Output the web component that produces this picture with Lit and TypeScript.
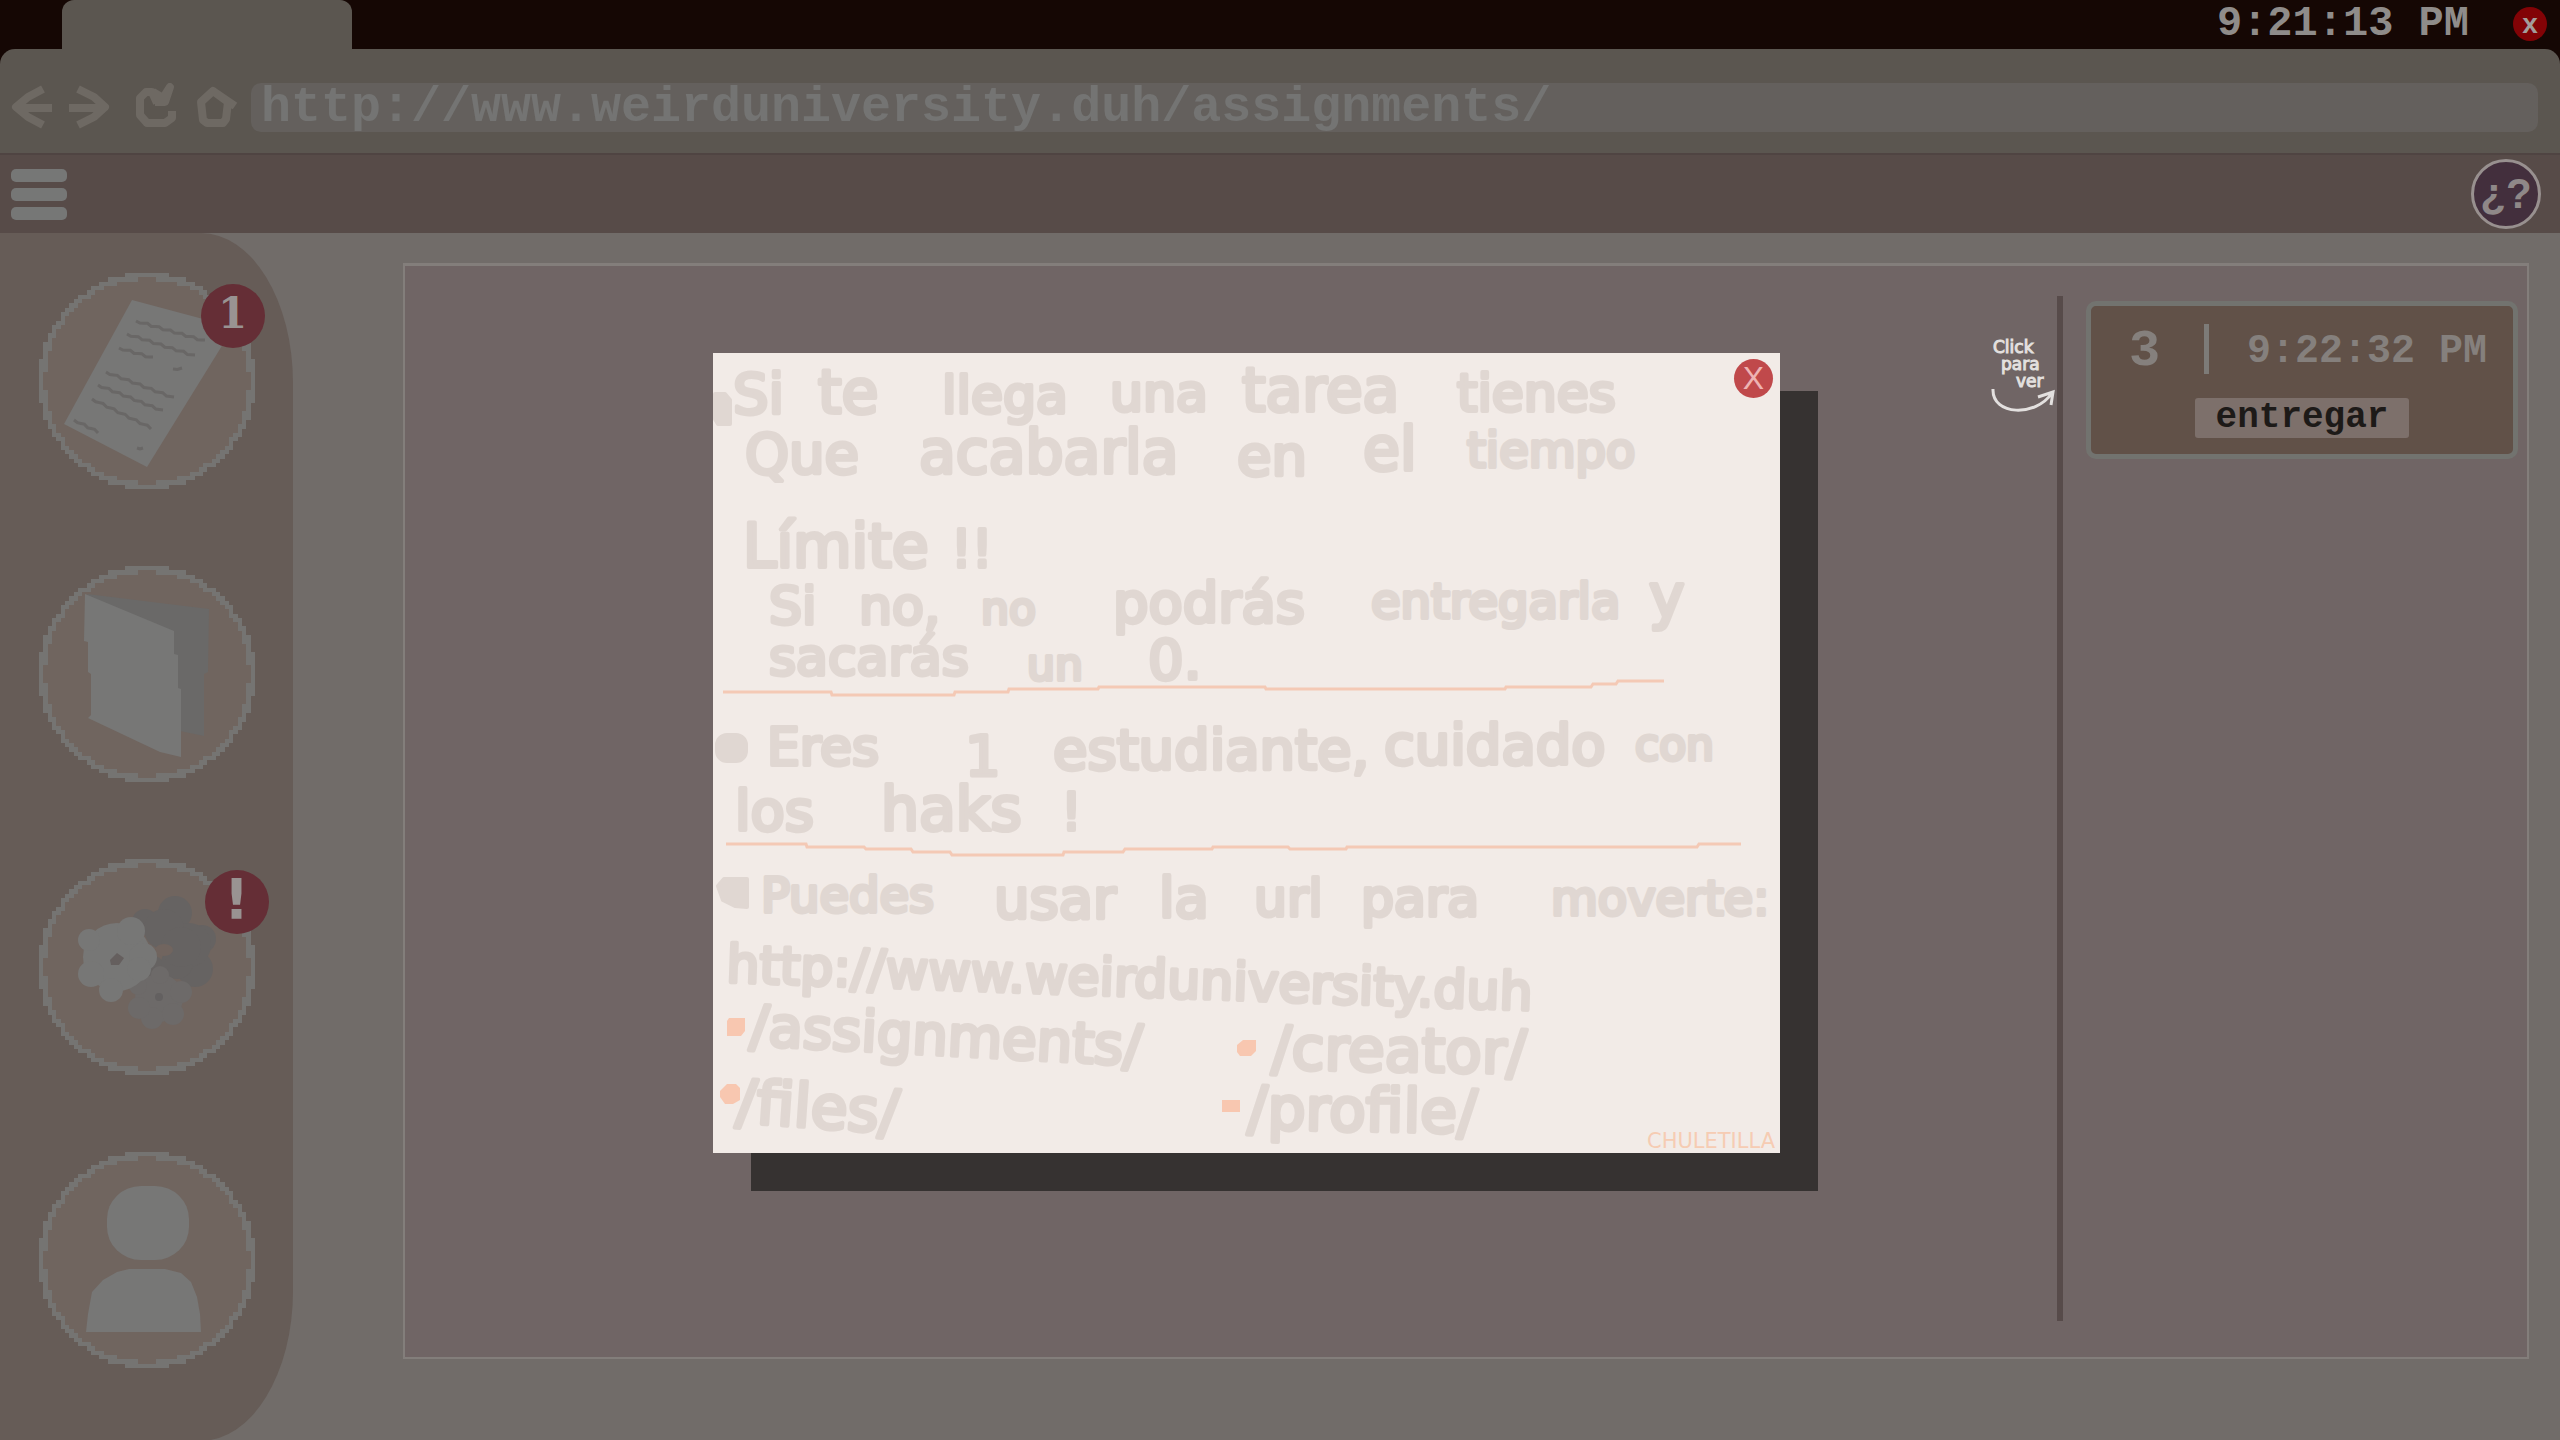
import { LitElement, html, svg, css } from "lit";
import { customElement } from "lit/decorators.js";

type Word = [text: string, x: number, y: number, size: number, tilt?: number];

/** Words of the handwritten note: text, left edge, baseline, size and tilt. */
const WORDS: Word[] = [
  ["Si", 20, 60, 56], ["te", 105, 60, 60], ["llega", 229, 60, 52], ["una", 397, 58, 52], ["tarea", 529, 58, 60], ["tienes", 744, 58, 52],
  ["Que", 32, 120, 56], ["acabarla", 206, 120, 60], ["en", 524, 122, 56], ["el", 650, 117, 60], ["tiempo", 754, 114, 48],
  ["Límite", 30, 214, 60], ["!!", 238, 214, 52],
  ["Si", 56, 271, 52], ["no,", 146, 271, 52], ["no", 268, 271, 44], ["podrás", 400, 269, 56], ["entregarla", 658, 265, 48], ["y", 936, 264, 60],
  ["sacarás", 56, 322, 52], ["un", 314, 327, 44], ["0.", 435, 326, 56],
  ["Eres", 54, 412, 52], ["1", 252, 422, 56], ["estudiante,", 340, 416, 56], ["cuidado", 671, 411, 56], ["con", 922, 407, 44],
  ["los", 22, 477, 56], ["haks", 168, 477, 60], ["!", 348, 477, 52],
  ["Puedes", 48, 559, 48], ["usar", 281, 565, 56], ["la", 446, 564, 56], ["url", 541, 563, 52], ["para", 648, 563, 52], ["moverte:", 838, 562, 48],
  ["http://www.weirduniversity.duh", 13, 629, 52, 2],
  ["/assignments/", 36, 692, 56, 3],
  ["/creator/", 558, 716, 60, 1],
  ["/files/", 22, 769, 60, 4],
  ["/profile/", 534, 776, 60, 1],
];

/** Blocky circle outline on a grid of the given number of cells. */
function blockRing(cells: number, thickness: number): string {
  const r = cells / 2;
  let d = "";
  for (let y = 0; y < cells; y++) {
    for (let x = 0; x < cells; x++) {
      const dist = Math.hypot(x + 0.5 - r, y + 0.5 - r);
      if (dist <= r && dist > r - thickness) d += `M${x} ${y}h1v1h-1z`;
    }
  }
  return d;
}

/** Wavy scribble between two points. */
function scribble([x1, y1, x2, y2]: number[]): string {
  const n = Math.max(1, Math.round(Math.hypot(x2 - x1, y2 - y1) / 4));
  let d = `M${x1} ${y1}`;
  for (let i = 1; i <= n; i++) {
    const t = i / n;
    const wave = i % 3 === 0 ? -1 : i % 3 === 1 ? 1 : 0;
    d += `L${x1 + (x2 - x1) * t} ${y1 + (y2 - y1) * t + wave}`;
  }
  return d;
}

const RING = blockRing(50, 1.4);
const SCRIBBLES = [
  [97, 48, 166, 68], [88, 61, 156, 83], [80, 75, 114, 85], [134, 96, 143, 95], [67, 99, 135, 125],
  [59, 112, 124, 138], [53, 126, 112, 155], [35, 147, 59, 159], [98, 175, 104, 175],
];

const dots = (list: number[][]) => list.map(([x, y, r]) => svg`<circle cx=${x} cy=${y} r=${r} />`);

const ICONS = {
  tasks: svg`
    <polygon points="93,27 194,54 181,76 108,194 25,151" fill="#777776" />
    ${SCRIBBLES.map((s) => svg`<path d=${scribble(s)} fill="none" stroke="#696766" stroke-width="3" />`)}`,
  files: svg`
    <polygon points="48,28 170,43 169,106 165,108 165,170 141,165" fill="#6a6968" />
    <polygon points="46,28 135,65 135,88 139,89 139,122 142,123 142,191 121,186 49,152 52,149 52,108 49,106 49,76 45,75" fill="#777776" />`,
  creator: svg`
    <g fill="#666362">${dots([[106, 63, 13], [136, 54, 17], [163, 80, 14], [156, 110, 18], [114, 108, 11], [150, 86, 22], [125, 70, 20], [138, 104, 16], [142, 88, 20]])}</g>
    <ellipse cx="125" cy="91" rx="9" ry="6" fill="#71655f" />
    <g fill="#6d6a69">${dots([[120, 139, 24], [121, 116, 9], [142, 133, 11], [134, 155, 11], [113, 159, 11], [100, 149, 11], [99, 127, 9]])}</g>
    <circle cx="120" cy="138" r="4" fill="#636060" />
    <g fill="#777776">${dots([[78, 98, 34], [50, 81, 11], [92, 72, 14], [104, 98, 14], [100, 110, 12], [72, 131, 12], [52, 115, 13]])}</g>
    <polygon points="71,101 78,94 85,99 80,106 72,106" fill="#655f5e" />`,
  profile: svg`
    <g fill="#777776">
      <rect x="68" y="34" width="82" height="74" rx="34" ry="33" />
      <path d="M47 180L49 162L53 140L64 128L78 120L90 117H126L142 121L152 130L158 145L161 162L162 180Z" />
    </g>`,
};

@customElement("app-root")
export class AppRoot extends LitElement {
  static styles = css`
    :host {
      display: block;
      --mono: "Liberation Mono", "Courier New", monospace;
      font-family: var(--mono);
      font-weight: 700;
    }
    * { box-sizing: border-box; }
    button, input {
      font: inherit;
      color: inherit;
      border: 0;
      padding: 0;
      margin: 0;
      background: none;
    }
    svg { display: block; }
    .page {
      position: relative;
      display: flex;
      flex-direction: column;
      min-height: 100vh;
      background: #716c69;
    }
    .titlebar {
      display: flex;
      justify-content: space-between;
      height: 64px;
      margin-bottom: -15px;
      padding: 0 13px 0 62px;
      background: #150704;
    }
    .tab {
      width: 290px;
      border-radius: 12px 12px 0 0;
      background: #5b5650;
    }
    .status {
      display: flex;
      align-items: center;
      gap: 44px;
      height: 48px;
    }
    .clock {
      font-size: 42px;
      line-height: 48px;
      color: #8f8c8a;
    }
    .quit {
      width: 34px;
      height: 34px;
      border-radius: 50%;
      background: #820306;
      color: #a39c9a;
      font: 700 28px/30px "Liberation Sans", sans-serif;
    }
    .browser {
      display: flex;
      align-items: center;
      height: 106px;
      padding: 12px 22px 0 8px;
      border-radius: 15px 15px 0 0;
      border-bottom: 2px solid #4f4442;
      background: #5b5650;
    }
    .nav { display: flex; width: 243px; }
    .nav svg {
      fill: none;
      stroke: #6e6963;
      stroke-width: 8;
      stroke-linejoin: round;
    }
    .url {
      flex: 1;
      height: 49px;
      padding: 0 10px;
      border-radius: 10px;
      background: #64605d;
      color: #747473;
      font-size: 50px;
    }
    .toolbar {
      display: flex;
      align-items: center;
      justify-content: space-between;
      height: 78px;
      padding: 0 19px 0 11px;
      background: #574b48;
    }
    .menu {
      display: flex;
      flex-direction: column;
      gap: 6px;
    }
    .bar {
      display: block;
      width: 56px;
      height: 13px;
      border-radius: 5px;
      background: #767776;
    }
    .help {
      width: 70px;
      height: 70px;
      border: 3px solid #98908f;
      border-radius: 50%;
      background: #432f3d;
      color: #8f8888;
      font: 700 42px/50px "Liberation Sans", sans-serif;
    }
    .main {
      flex: 1;
      display: flex;
    }
    .side {
      display: flex;
      flex-direction: column;
      align-items: center;
      gap: 77px;
      width: 293px;
      padding: 40px 0 73px;
      border-radius: 0 92px 92px 0 / 0 150px 150px 0;
      background: #665c57;
    }
    .round { position: relative; width: 216px; height: 216px; }
    .ring { shape-rendering: crispEdges; }
    .badge {
      position: absolute;
      top: 11px;
      right: -10px;
      width: 64px;
      height: 64px;
      border-radius: 50%;
      background: #652e36;
      color: #999392;
      font: 700 42px/60px "DejaVu Serif", serif;
      text-align: center;
    }
    .alert { right: -14px; font: 700 56px/58px "DejaVu Sans", sans-serif; }
    .panel {
      flex: 1;
      display: flex;
      margin: 30px 31px 82px 110px;
      padding: 30px 9px 36px 0;
      border: 2px solid #837e7b;
      border-top-width: 3px;
      background: #706565;
    }
    .board {
      flex: 1;
      display: flex;
      justify-content: flex-end;
      padding: 36px 3px 0 0;
    }
    .hint { overflow: visible; font-family: "DejaVu Sans", sans-serif; font-weight: 400; }
    .tasks {
      width: 461px;
      padding: 5px 0 0 23px;
      border-left: 6px solid #574b4a;
    }
    .card {
      display: grid;
      grid-template-columns: 118px 1fr;
      grid-template-rows: 50px 40px;
      align-content: start;
      row-gap: 24px;
      height: 158px;
      padding: 18px 0 0;
      border: 5px solid #72736f;
      border-radius: 10px;
      background: #615148;
      color: #85807d;
    }
    .count {
      border-right: 5px solid #7d7b78;
      font-size: 52px;
      line-height: 56px;
      padding-left: 38px;
    }
    .due {
      padding-left: 38px;
      font-size: 40px;
      line-height: 56px;
    }
    .submit {
      grid-column: 1 / 3;
      justify-self: center;
      width: 214px;
      height: 40px;
      border-radius: 3px;
      background: #7d706b;
      color: #1d1a18;
      font-size: 36px;
      line-height: 36px;
    }
    .note {
      position: absolute;
      top: 353px;
      left: 713px;
      width: 1067px;
      background: #f2ebe7;
      box-shadow: 38px 38px 0 #363231;
    }
    .ink {
      fill: #e0d7d2;
      stroke: #e0d7d2;
      stroke-width: 4;
      stroke-linejoin: round;
      font-family: "DejaVu Sans", sans-serif;
      font-weight: 400;
    }
    .rule { fill: none; stroke: #f4c9b5; stroke-width: 3; }
    .mark { fill: #f8c7b0; }
    .sign { fill: #f6ccb3; font: 400 21px "DejaVu Sans", sans-serif; }
    .close {
      position: absolute;
      top: 6px;
      right: 7px;
      width: 39px;
      height: 39px;
      border-radius: 50%;
      background: #c0494b;
      color: #eeb3b3;
      font: 400 32px/39px "Liberation Sans", sans-serif;
    }
  `;

  private word([text, x, y, size, tilt = 0]: Word) {
    return svg`<text x=${x} y=${y} font-size=${size} transform=${`rotate(${tilt} ${x} ${y})`}>${text}</text>`;
  }

  private round(icon: unknown, label: string, badge = "", alert = false) {
    return html`
      <button class="round" aria-label=${label}>
        <svg width="216" height="216" viewBox="0 0 216 216">
          <circle cx="108" cy="108" r="105" fill="#70655f" />
          <svg class="ring" width="216" height="216" viewBox="0 0 50 50"><path d=${RING} fill="#757472" /></svg>
          ${icon}
        </svg>
        ${badge ? html`<span class="badge ${alert ? "alert" : ""}">${badge}</span>` : ""}
      </button>`;
  }

  render() {
    return html`
      <div class="page">
        <header class="titlebar">
          <div class="tab"></div>
          <div class="status">
            <time class="clock">9:21:13 PM</time>
            <button class="quit">x</button>
          </div>
        </header>

        <nav class="browser">
          <div class="nav">
            <button aria-label="Back"><svg width="52" height="48" viewBox="8 84 52 48"><path d="M43 90L28 98L16 108L28 118L43 126M18 109H52" /></svg></button>
            <button aria-label="Forward"><svg width="64" height="48" viewBox="60 84 64 48"><path d="M78 90L94 98L105 108L94 118L78 126M69 109H102" /></svg></button>
            <button aria-label="Reload"><svg width="64" height="48" viewBox="124 84 64 48"><path d="M157 104L152 93H146L140 99V116L147 124H165L172 119V112M153 93L163 99L170 88L165 103H155" /></svg></button>
            <button aria-label="Home"><svg width="56" height="48" viewBox="188 84 56 48"><path d="M213 92L201 103L203 121L207 124H223L226 120L228 103L213 92L235 107" /></svg></button>
          </div>
          <input class="url" aria-label="URL" spellcheck="false" value="http://www.weirduniversity.duh/assignments/" />
        </nav>

        <div class="toolbar">
          <button class="menu" aria-label="Menu"><span class="bar"></span><span class="bar"></span><span class="bar"></span></button>
          <button class="help">¿?</button>
        </div>

        <div class="main">
          <aside class="side">
            ${this.round(ICONS.tasks, "Assignments", "1")}
            ${this.round(ICONS.files, "Files")}
            ${this.round(ICONS.creator, "Creator", "!", true)}
            ${this.round(ICONS.profile, "Profile")}
          </aside>

          <section class="panel">
            <div class="board">
              <svg class="hint" width="64" height="84" viewBox="0 0 64 84" fill="#e3e0df">
                <g stroke="#e3e0df" stroke-width="1">
                  <text x="3" y="21" font-size="17">Click</text>
                  <text x="11" y="38" font-size="17">para</text>
                  <text x="26" y="55" font-size="17">ver</text>
                </g>
                <path d="M3 57C2 84 46 85 62 61M48 65L63 60L61 73" fill="none" stroke="#e3e0df" stroke-width="3" />
              </svg>
            </div>
            <div class="tasks">
              <article class="card">
                <span class="count">3</span>
                <time class="due">9:22:32 PM</time>
                <button class="submit">entregar</button>
              </article>
            </div>
          </section>
        </div>

        <section class="note" role="dialog" aria-label="Chuletilla">
          <svg viewBox="0 0 1067 800" width="100%">
            <g class="ink">
              <path d="M2 41H12L17 47V71H5L2 66Z" />
              <rect x="4" y="382" width="29" height="26" rx="10" />
              <path d="M5 533L11 526H34V554L22 553L10 547Z" />
              ${WORDS.map(this.word)}
            </g>
            <path class="rule" d="M10 339H118L119 342H241L242 339H295L296 336H385L386 334H552L553 336H792L793 334H878L880 331H903L905 328H951" />
            <path class="rule" d="M13 491H93L94 494H151L153 496H198L200 499H237L239 502H350L351 499H410L412 496H499L500 494H575L577 496H633L634 494H984L986 491H1028" />
            <g class="mark">
              <path d="M16 665H32V678L28 683H14V668Z" />
              <path d="M7 738L14 731H23L27 735V747L20 751H12L7 744Z" />
              <path d="M530 687H543V698L538 703H527L524 699V692Z" />
              <rect x="509" y="747" width="18" height="12" />
            </g>
            <text class="sign" x="934" y="795">CHULETILLA</text>
          </svg>
          <button class="close">X</button>
        </section>
      </div>
    `;
  }
}
